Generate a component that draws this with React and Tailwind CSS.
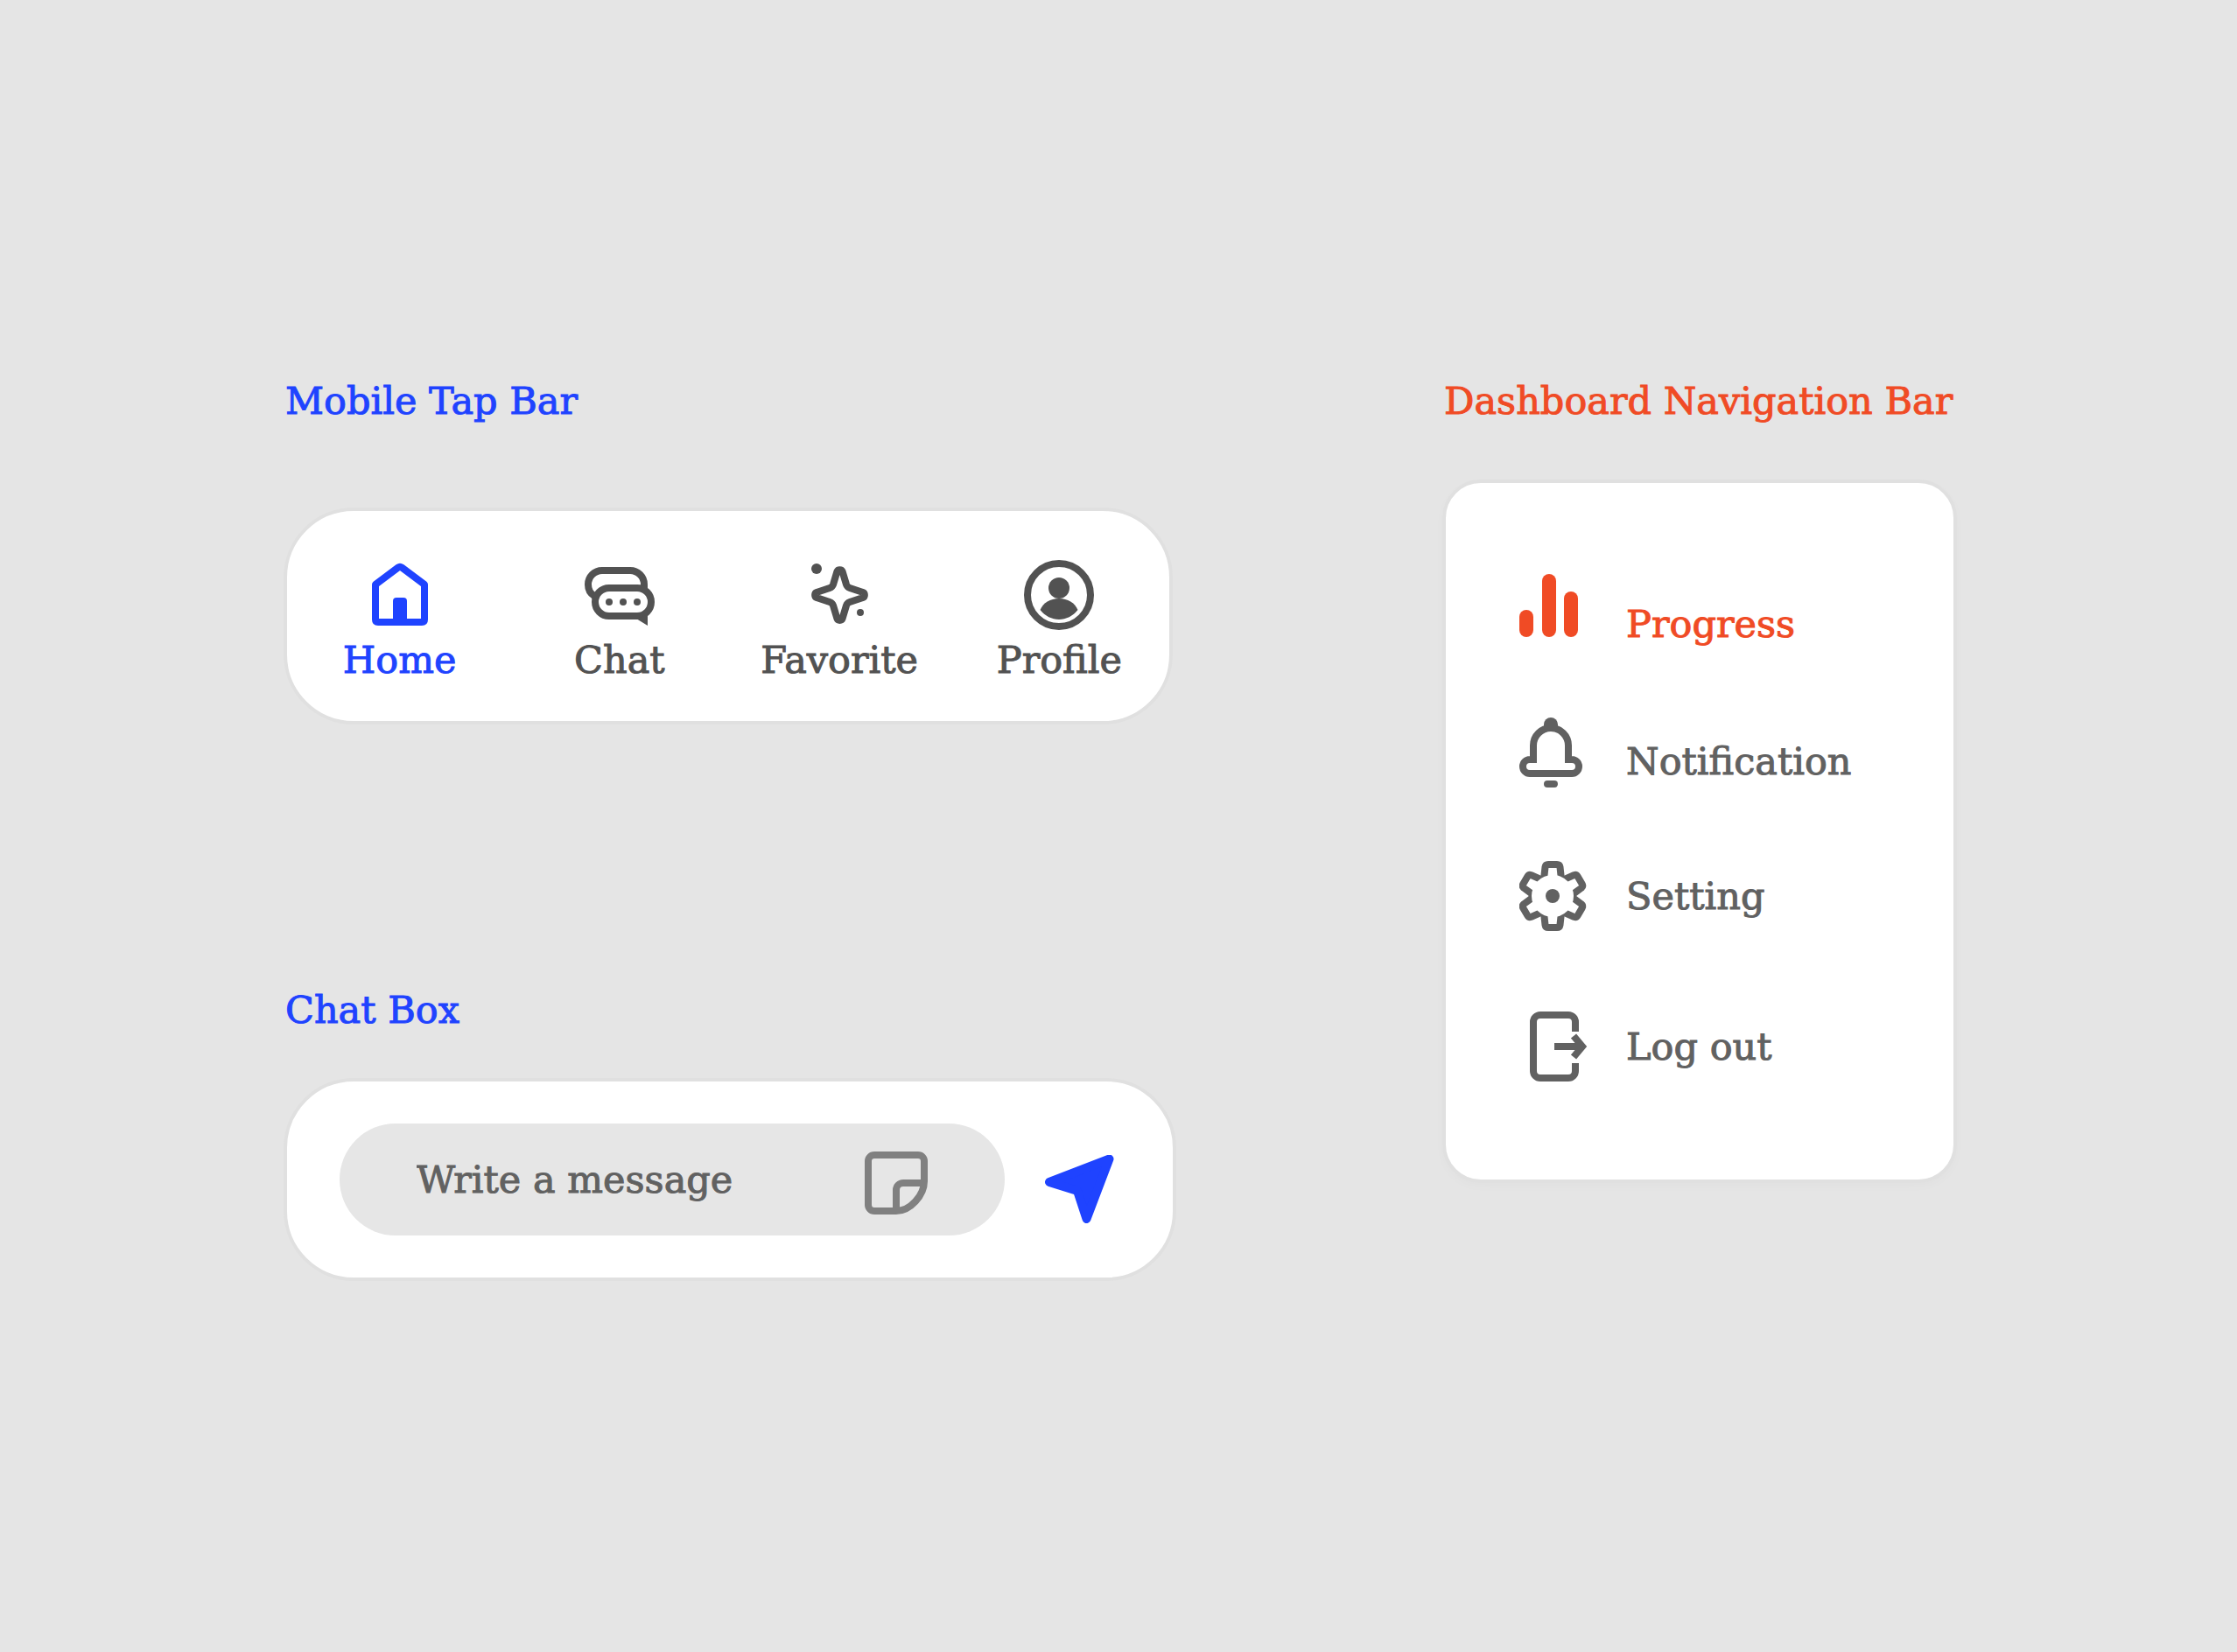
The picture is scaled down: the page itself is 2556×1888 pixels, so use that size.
import { useState } from 'react';

function HomeIcon() {
    return (
        <svg className="size-20" viewBox="0 0 80 80" fill="none" aria-hidden="true">
            <path
                d="M12 28 L38 8.5 Q40 7 42 8.5 L68 28 V68 Q68 71 65 71 H15 Q12 71 12 68 Z"
                stroke="currentColor"
                strokeWidth="8"
                strokeLinejoin="round"
            />
            <path d="M32 72 V47 a4 4 0 0 1 4 -4 H44 a4 4 0 0 1 4 4 V72 Z" fill="currentColor" />
        </svg>
    );
}

function ChatIcon() {
    return (
        <svg className="size-20" viewBox="0 0 80 80" fill="none" aria-hidden="true">
            <path
                d="M11 41 C6 38 4 34 4 28 A16 16 0 0 1 20 12 H52 A16 16 0 0 1 68 28 V32"
                stroke="currentColor"
                strokeWidth="8"
            />
            <rect x="12" y="32" width="64" height="32" rx="16" stroke="currentColor" strokeWidth="8" />
            <path d="M59 67 L72 75 V62 Z" fill="currentColor" />
            <circle cx="28" cy="48" r="4" fill="currentColor" />
            <circle cx="44" cy="48" r="4" fill="currentColor" />
            <circle cx="60" cy="48" r="4" fill="currentColor" />
        </svg>
    );
}

function SparkIcon() {
    return (
        <svg className="size-20" viewBox="0 0 80 80" fill="none" aria-hidden="true">
            <path
                d="M37.5 13 C38.5 10.5 42.5 10.5 43.5 13 L48 28 Q49 31 52 32 L67 37 C69.5 38 69.5 42 67 43 L52 48 Q49 49 48 52 L43.5 67 C42.5 69.5 38.5 69.5 37.5 67 L33 52 Q32 49 29 48 L14 43 C11.5 42 11.5 38 14 37 L29 32 Q32 31 33 28 Z"
                stroke="currentColor"
                strokeWidth="8"
                strokeLinejoin="round"
            />
            <circle cx="14" cy="10" r="6" fill="currentColor" />
            <circle cx="64" cy="60" r="4" fill="currentColor" />
        </svg>
    );
}

function ProfileIcon() {
    return (
        <svg className="size-20" viewBox="0 0 80 80" fill="none" aria-hidden="true">
            <circle cx="40" cy="40" r="36" stroke="currentColor" strokeWidth="8" />
            <circle cx="40" cy="32" r="12" fill="currentColor" />
            <path
                d="M18.5 57 C22 49 30 44 40 44 C50 44 58 49 61.5 57 C56 64 48 68 40 68 C32 68 24 64 18.5 57 Z"
                fill="currentColor"
            />
        </svg>
    );
}

function StickerIcon() {
    return (
        <svg className="h-20 w-[72px]" viewBox="0 -8 72 80" fill="none" aria-hidden="true">
            <path
                d="M36 68 H11 a7 7 0 0 1 -7 -7 V11 a7 7 0 0 1 7 -7 H61 a7 7 0 0 1 7 7 V34 C68 50 52 68 36 68 Z"
                stroke="currentColor"
                strokeWidth="8"
            />
            <path d="M36 68 V44 a8 8 0 0 1 8 -8 H68" stroke="currentColor" strokeWidth="8" />
        </svg>
    );
}

function SendIcon() {
    return (
        <svg className="size-20" viewBox="0 0 80 80" aria-hidden="true">
            <path
                d="M73.5 4.5 L5 31 L37 41 L47.5 73 Z"
                fill="currentColor"
                stroke="currentColor"
                strokeWidth="10"
                strokeLinejoin="round"
            />
        </svg>
    );
}

function ProgressIcon() {
    return (
        <svg className="h-[72px] w-20" viewBox="0 0 80 72" fill="currentColor" aria-hidden="true">
            <rect x="0" y="41" width="16" height="31" rx="8" />
            <rect x="26" y="0" width="16" height="72" rx="8" />
            <rect x="51" y="20" width="16" height="52" rx="8" />
        </svg>
    );
}

function BellIcon() {
    return (
        <svg className="size-20" viewBox="0 0 80 80" fill="none" aria-hidden="true">
            <path
                d="M16 48 V32 A20 20 0 0 1 56 32 V48 H60 a8 8 0 0 1 0 16 H12 a8 8 0 0 1 0 -16 Z"
                stroke="currentColor"
                strokeWidth="8"
            />
            <path d="M28 12 V8 a8 8 0 0 1 16 0 V12 Z" fill="currentColor" />
            <rect x="28" y="72" width="16" height="8" rx="4" fill="currentColor" />
        </svg>
    );
}

const gearTeeth = [0, 60, 120, 180, 240, 300];

function GearIcon() {
    return (
        <svg className="size-20" viewBox="0 0 80 80" fill="none" aria-hidden="true">
            <g transform="translate(38 40)">
                {gearTeeth.map((angle) => (
                    <path
                        key={angle}
                        d="M-10 -19 L-8.5 -33 Q-8 -36 -5 -36 H5 Q8 -36 8.5 -33 L10 -19"
                        transform={`rotate(${angle})`}
                        stroke="currentColor"
                        strokeWidth="8"
                        strokeLinejoin="round"
                    />
                ))}
                <circle r="24" fill="white" />
                <circle r="8" fill="currentColor" />
            </g>
        </svg>
    );
}

function LogoutIcon() {
    return (
        <svg className="size-20" viewBox="0 0 80 80" fill="none" stroke="currentColor" strokeWidth="8" aria-hidden="true">
            <path d="M64 23 V12 a8 8 0 0 0 -8 -8 H24 a8 8 0 0 0 -8 8 V68 a8 8 0 0 0 8 8 H56 a8 8 0 0 0 8 -8 V59" />
            <path d="M40 40 H70" />
            <path d="M62 28 L72 40 L62 52" />
        </svg>
    );
}

const tabs = [
    { id: 'home', label: 'Home', Icon: HomeIcon },
    { id: 'chat', label: 'Chat', Icon: ChatIcon },
    { id: 'favorite', label: 'Favorite', Icon: SparkIcon },
    { id: 'profile', label: 'Profile', Icon: ProfileIcon },
];

const links = [
    { id: 'progress', label: 'Progress', Icon: ProgressIcon, align: 'items-baseline' },
    { id: 'notification', label: 'Notification', Icon: BellIcon, align: 'items-end' },
    { id: 'setting', label: 'Setting', Icon: GearIcon, align: 'items-center' },
    { id: 'logout', label: 'Log out', Icon: LogoutIcon, align: 'items-center', spacing: 'mt-2' },
];

function TapBar() {
    const [active, setActive] = useState('home');

    return (
        <nav
            aria-label="Mobile"
            className="mr-1 grid grid-cols-4 rounded-[80px] border-4 border-[#e0e0e0] bg-white pt-14 pb-10 pl-[3px]"
        >
            {tabs.map(({ id, label, Icon }) => (
                <button
                    key={id}
                    type="button"
                    onClick={() => setActive(id)}
                    className={`flex flex-col items-center gap-1 ${active === id ? 'text-[#1f43ff]' : 'text-[#525252]'}`}
                >
                    <Icon />
                    <span>{label}</span>
                </button>
            ))}
        </nav>
    );
}

function ChatBox() {
    const [message, setMessage] = useState('');

    const handleSubmit = (e) => {
        e.preventDefault();
        setMessage('');
    };

    return (
        <form
            onSubmit={handleSubmit}
            className="flex items-end gap-[46px] rounded-[80px] border-4 border-[#e0e0e0] bg-white py-12 pr-[66px] pl-[60px]"
        >
            <div className="flex min-w-0 flex-1 items-center rounded-full bg-[#e6e6e6] px-[88px] py-6">
                <input
                    type="text"
                    aria-label="Message"
                    placeholder="Write a message"
                    value={message}
                    onChange={(e) => setMessage(e.target.value)}
                    className="min-w-0 flex-1 bg-transparent text-[#616161] outline-none placeholder:text-[#616161]"
                />
                <button type="button" aria-label="Stickers" className="text-[#808080]">
                    <StickerIcon />
                </button>
            </div>
            <button type="submit" aria-label="Send" className="mb-3 text-[#1f43ff]">
                <SendIcon />
            </button>
        </form>
    );
}

function SideNav() {
    const [active, setActive] = useState('progress');

    return (
        <nav
            aria-label="Dashboard"
            className="rounded-[44px] border-4 border-[#e0e0e0] bg-white pt-[104px] pb-28 pl-[84px] shadow-[0_4px_12px_rgba(0,0,0,0.02)]"
        >
            <ul className="grid auto-rows-[88px] gap-y-[76px]">
                {links.map(({ id, label, Icon, align, spacing }) => (
                    <li key={id} className={spacing}>
                        <a
                            href={`#${id}`}
                            onClick={() => setActive(id)}
                            className={`flex gap-[42px] ${align} ${active === id ? 'text-[#f04b25]' : 'text-[#616161]'}`}
                        >
                            <Icon />
                            <span>{label}</span>
                        </a>
                    </li>
                ))}
            </ul>
        </nav>
    );
}

export default function App() {
    return (
        <main className="flex min-h-screen items-start justify-between gap-20 bg-[#e5e5e5] pt-[428px] pr-[320px] pb-20 pl-[324px] font-['DejaVu_Serif',serif] text-[43px] leading-[60px] [-webkit-text-stroke:1px]">
            <div className="w-full max-w-[1020px]">
                <section>
                    <h2 className="mb-[92px] pl-0.5 text-[#1f43ff]">Mobile Tap Bar</h2>
                    <TapBar />
                </section>
                <section className="mt-[296px]">
                    <h2 className="mb-12 pl-0.5 text-[#1f43ff]">Chat Box</h2>
                    <ChatBox />
                </section>
            </div>
            <section className="w-full max-w-[588px]">
                <h2 className="mb-[60px] pl-0.5 whitespace-nowrap text-[#f04b25]">Dashboard Navigation Bar</h2>
                <SideNav />
            </section>
        </main>
    );
}
